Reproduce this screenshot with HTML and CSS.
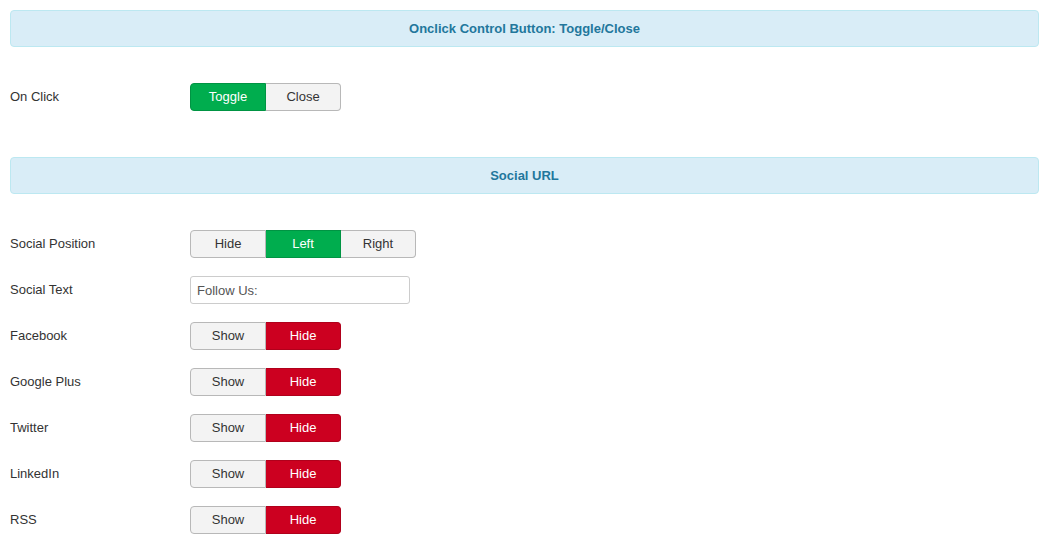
FILE: index.html
```html
<!DOCTYPE html>
<html lang="en">
<head>
<meta charset="UTF-8">
<meta name="viewport" content="width=device-width, initial-scale=1.0">
<link rel="stylesheet" href="styles.css">
</head>
<body>

<div class="panel">
    <div class="section-title">Onclick Control Button: Toggle/Close</div>

    <div class="control-group">
        <label>On Click</label>
        <div class="btn-group">
            <span class="btn active-green">Toggle</span>
            <span class="btn">Close</span>
        </div>
    </div>

    <div class="section-title spaced">Social URL</div>

    <div class="control-group">
        <label>Social Position</label>
        <div class="btn-group">
            <span class="btn">Hide</span>
            <span class="btn active-green">Left</span>
            <span class="btn">Right</span>
        </div>
    </div>
    <div class="control-group">
        <label for="social-text">Social Text</label>
        <input type="text" id="social-text" class="text-input" value="Follow Us:">
    </div>
    <div class="control-group">
        <label>Facebook</label>
        <div class="btn-group">
            <span class="btn">Show</span>
            <span class="btn active-red">Hide</span>
        </div>
    </div>
    <div class="control-group">
        <label>Google Plus</label>
        <div class="btn-group">
            <span class="btn">Show</span>
            <span class="btn active-red">Hide</span>
        </div>
    </div>
    <div class="control-group">
        <label>Twitter</label>
        <div class="btn-group">
            <span class="btn">Show</span>
            <span class="btn active-red">Hide</span>
        </div>
    </div>
    <div class="control-group">
        <label>LinkedIn</label>
        <div class="btn-group">
            <span class="btn">Show</span>
            <span class="btn active-red">Hide</span>
        </div>
    </div>
    <div class="control-group">
        <label>RSS</label>
        <div class="btn-group">
            <span class="btn">Show</span>
            <span class="btn active-red">Hide</span>
        </div>
    </div>
</div>

</body>
</html>
```

FILE: styles.css
```css
body {
    font-family: "Liberation Sans", Arial, sans-serif;
    font-size: 13px;
    color: #333;
    background-color: #fff;
    margin: 0;
    padding: 10px 9px 10px 10px;
}
.section-title {
    height: 35px;
    line-height: 35px;
    text-align: center;
    font-weight: bold;
    color: #22779c;
    background-color: #d9edf7;
    border: 1px solid #bce8f1;
    border-radius: 4px;
    margin-bottom: 36px;
}
.section-title.spaced {
    margin-top: 46px;
}
.control-group {
    display: flex;
    align-items: center;
    height: 28px;
    margin-bottom: 18px;
}
.control-group label {
    width: 180px;
    flex-shrink: 0;
    margin-bottom: 2px;
}
.btn-group {
    display: flex;
}
.btn {
    box-sizing: border-box;
    width: 75px;
    height: 28px;
    line-height: 26px;
    text-align: center;
    background-color: #f3f3f3;
    border: 1px solid #b8b8b8;
    color: #333;
    cursor: pointer;
}
.btn + .btn {
    border-left: none;
}
.btn:first-child {
    border-radius: 4px 0 0 4px;
    width: 76px;
}
.btn:last-child {
    border-radius: 0 4px 4px 0;
}
.btn.active-green {
    background-color: #00ad4e;
    border-color: #009443;
    color: #fff;
}
.btn.active-red {
    background-color: #cc0020;
    border-color: #b0001b;
    color: #fff;
}
.text-input {
    box-sizing: border-box;
    width: 220px;
    height: 28px;
    padding: 4px 6px;
    font-family: inherit;
    font-size: 13px;
    color: #555;
    border: 1px solid #ccc;
    border-radius: 3px;
    margin: 0;
}
```
